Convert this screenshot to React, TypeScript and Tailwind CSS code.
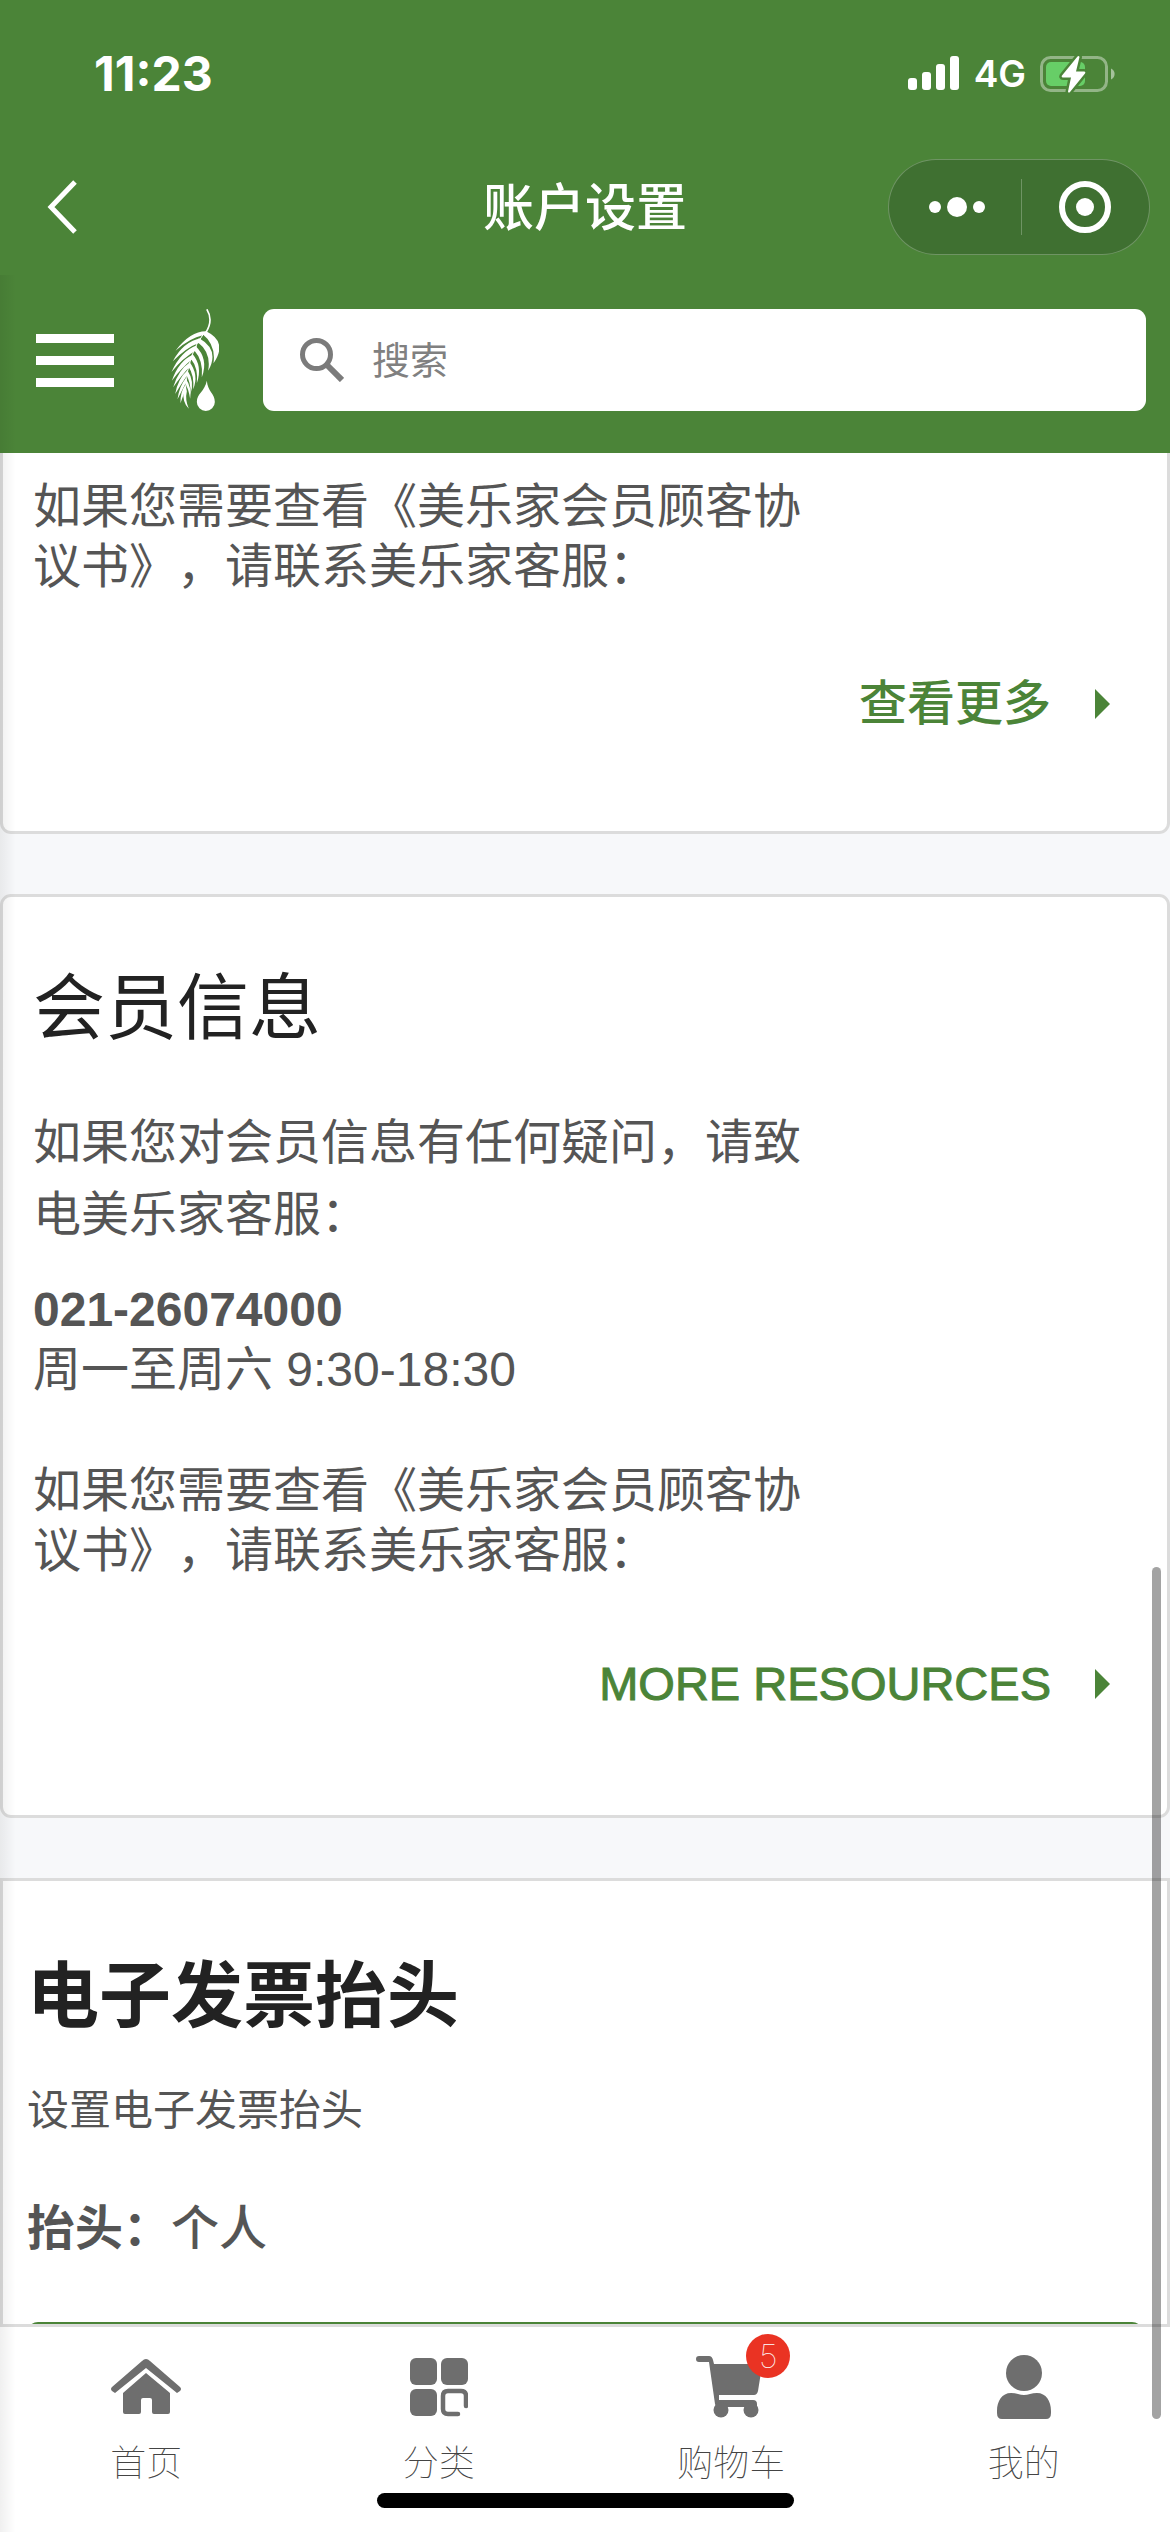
import type { ReactNode } from "react";

const leaflets = [
  "M170 124Q122 122 76 182Q120 144 158 136Z",
  "M153 145Q100 154 68 214Q108 172 148 158Z",
  "M140 166Q92 184 64 246Q98 204 138 181Z",
  "M128 194Q86 212 65 272Q94 234 126 208Z",
  "M120 216Q84 240 69 292Q94 256 118 231Z",
  "M113 240Q84 264 75 312Q94 280 112 254Z",
  "M108 264Q88 286 82 328Q96 300 108 277Z",
  "M105 286Q90 306 91 340Q98 318 106 299Z",
  "M156 131L168 124Q234 156 190 220Q198 164 156 131Z",
  "M146 144Q210 180 174 242Q184 188 142 156Z",
  "M136 168Q176 206 155 262Q160 212 132 181Z",
  "M127 192Q158 228 140 280Q145 234 122 206Z",
  "M118 216Q147 254 129 298Q133 256 114 229Z",
  "M111 239Q134 274 121 312Q123 278 107 252Z",
  "M106 264Q126 294 120 326Q115 296 103 275Z",
  "M106 284L100 300Q96 338 116 356Q104 330 110 304Z",
];

function LeafLogo() {
  return (
    <svg viewBox="63 57 143 306" className="h-[102px] w-12" fill="white" role="img" aria-label="美乐家">
      <path d="M170 58Q190 90 168 126" fill="none" stroke="white" strokeWidth="5" />
      <path d="M164 126Q112 190 106 296" fill="none" stroke="white" strokeWidth="3" />
      {leaflets.map((d) => (
        <path key={d} d={d} />
      ))}
      <path d="M170 272C172 304 194 310 194 336A27 27 0 0 1 140 336C140 310 164 304 170 272Z" />
    </svg>
  );
}

function SignalIcon() {
  return (
    <svg viewBox="0 0 52 36" className="h-9 w-[52px]" fill="white" aria-hidden="true">
      <rect x="0" y="22" width="9" height="12" rx="3" />
      <rect x="14" y="16" width="9" height="18" rx="3" />
      <rect x="28" y="8" width="9" height="26" rx="3" />
      <rect x="42" y="0" width="9" height="34" rx="3" />
    </svg>
  );
}

function BatteryIcon() {
  return (
    <svg viewBox="0 0 76 38" className="h-[38px] w-[76px]" aria-hidden="true">
      <rect x="1.5" y="2.5" width="65" height="33" rx="9" fill="none" stroke="white" strokeOpacity=".4" strokeWidth="3" />
      <path d="M71 13.500a6 6 0 0 1 0 11z" fill="white" fillOpacity=".5" />
      <rect x="6" y="7" width="39" height="24" rx="5" fill="#67ce67" />
      <path
        d="M37.500 1.500L22 20.500q-1 2 1 2h8L28 36.500q.5 2 2 .5L45 18.500q1-2-1-2h-8L39.500 2q-.5-1.500-2-.5z"
        fill="white"
        stroke="#4b8438"
        strokeWidth="5"
        paintOrder="stroke"
      />
    </svg>
  );
}

function HomeIcon() {
  return (
    <svg viewBox="0 0 70 56" className="h-14 w-[70px]" fill="#6e6e6e" aria-hidden="true">
      <path d="M31 2q4-4 8 0l30 26q2 2 0 4l-3 2L35 9 4 34l-3-2q-2-2 0-4z" />
      <path d="M35 14l24 20v19q0 2-2 2H43q-2 0-2-2V41q0-2-2-2h-7q-2 0-2 2v12q0 2-2 2H14q-2 0-2-2V34z" />
    </svg>
  );
}

function CategoryIcon() {
  return (
    <svg viewBox="0 0 58 59" className="h-[59px] w-[58px]" fill="#6e6e6e" aria-hidden="true">
      <rect width="27" height="27" rx="6" />
      <rect x="31" width="27" height="27" rx="6" />
      <rect y="31" width="27" height="27" rx="6" />
      <path
        d="M56 48V38q0-5-5-5H38q-5 0-5 5v13q0 5 5 5h10"
        fill="none"
        stroke="#6e6e6e"
        strokeWidth="4.500"
        strokeLinecap="round"
      />
    </svg>
  );
}

function CartIcon() {
  return (
    <svg viewBox="0 0 70 62" className="h-[62px] w-[70px]" fill="#6e6e6e" aria-hidden="true">
      <path d="M3 0h10q3 0 4 4l1 4h46q2 0 2 2l-4 25q-1 4-4 4H23v5h34q4 0 4 4v3H21q-1 0-2-3L13 6H3Q0 6 0 3t3-3z" />
      <circle cx="25" cy="54" r="7.500" />
      <circle cx="55" cy="54" r="7.500" />
    </svg>
  );
}

function UserIcon() {
  return (
    <svg viewBox="0 0 56 64" className="h-16 w-14" fill="#6e6e6e" aria-hidden="true">
      <circle cx="28" cy="18" r="18" />
      <path d="M15 38q4 0 7 1 6 2 12 0 3-1 7-1c9 0 14 8 14 18v2q0 6-5 6H6q-5 0-5-6v-2C1 46 6 38 15 38z" />
    </svg>
  );
}

function MoreLink({ children }: { children: ReactNode }) {
  return (
    <a href="#more" className="flex items-center justify-end gap-11 pr-[57px] font-medium text-[#4b8438]">
      {children}
      <svg viewBox="0 0 15 30" className="h-[30px] w-[15px]" fill="currentColor" aria-hidden="true">
        <path d="M0 0L15 15L0 30Z" />
      </svg>
    </a>
  );
}

function Agreement() {
  return (
    <p className="max-w-[800px]">
      如果您需要查看《美乐家会员顾客协议书》，请联系美乐家客服：
    </p>
  );
}

function NavItem({ icon, label, badge }: { icon: ReactNode; label: string; badge?: string }) {
  return (
    <a href="#nav" className="flex flex-1 flex-col items-center pt-6 text-4xl leading-[54px] font-thin text-[#444]">
      <span className="relative flex h-[72px] items-center">
        {icon}
        {badge && (
          <span className="absolute -top-[17px] -right-6 flex h-11 w-11 items-center justify-center rounded-full bg-[#ea3323] font-['Inter'] text-[33px] font-thin text-white">
            {badge}
          </span>
        )}
      </span>
      <span className="mt-[14px]">{label}</span>
    </a>
  );
}

export default function App() {
  return (
    <div
      lang="zh-CN"
      className="relative flex h-screen flex-col overflow-hidden bg-[#f7f8fa] font-['Liberation_Sans','Noto_Sans_CJK_SC',sans-serif] text-5xl leading-[60px] text-[#555] [text-spacing-trim:space-all]"
    >
      <header className="shrink-0 bg-[#4b8438] pb-[42px] text-white">
        <div className="flex items-center justify-between pt-11 pr-[54px] pl-[94px]">
          <span className="font-['Inter'] text-5xl leading-[60px] font-bold">11:23</span>
          <div className="flex items-center gap-[14px]">
            <SignalIcon />
            <span className="font-['Inter'] text-[37px] font-semibold">4G</span>
            <BatteryIcon />
          </div>
        </div>
        <div className="mt-[55px] grid grid-cols-[1fr_auto_1fr] items-center px-5">
          <button type="button" aria-label="返回" className="ml-[27px] justify-self-start">
            <svg viewBox="0 0 30 54" className="h-[54px] w-[30px]" fill="none" stroke="white" strokeWidth="5" aria-hidden="true">
              <path d="M28 2L4 27L28 52" />
            </svg>
          </button>
          <h1 className="pt-1 text-center text-[51px] font-medium">账户设置</h1>
          <div className="flex h-24 w-[262px] items-center justify-self-end rounded-full border border-white/25 bg-[#3f7031]">
            <button type="button" aria-label="更多" className="flex flex-1 items-center justify-center gap-[6px] pl-1">
              <span className="h-3 w-3 rounded-full bg-white" />
              <span className="h-5 w-5 rounded-full bg-white" />
              <span className="h-3 w-3 rounded-full bg-white" />
            </button>
            <span className="h-14 w-px bg-white/25" />
            <button type="button" aria-label="关闭" className="flex flex-1 justify-center">
              <span className="flex h-[52px] w-[52px] items-center justify-center rounded-full border-[6px] border-white">
                <span className="h-[18px] w-[18px] rounded-full bg-white" />
              </span>
            </button>
          </div>
        </div>
        <div className="mt-[54px] flex items-center pr-6 pl-9">
          <button type="button" aria-label="菜单" className="flex w-[78px] flex-col gap-[13px]">
            <span className="h-[9px] bg-white" />
            <span className="h-[9px] bg-white" />
            <span className="h-[9px] bg-white" />
          </button>
          <a href="#home" className="ml-[57px]">
            <LeafLogo />
          </a>
          <label className="ml-11 flex h-[102px] flex-1 items-center gap-7 rounded-[11px] bg-white pl-[37px]">
            <svg viewBox="0 0 44 44" className="h-11 w-11" fill="none" stroke="#7b7b7b" aria-hidden="true">
              <circle cx="16.500" cy="16.500" r="14" strokeWidth="5" />
              <path d="M27 27L42 42" strokeWidth="6" />
            </svg>
            <input
              type="search"
              aria-label="搜索"
              placeholder="搜索"
              className="min-w-0 flex-1 pt-[2px] text-[38px] text-[#444] outline-none placeholder:text-[#808080]"
            />
          </label>
        </div>
      </header>

      <main className="flex min-h-0 flex-1 flex-col gap-[60px] overflow-y-auto [scrollbar-width:none]">
        <section className="shrink-0 rounded-b-[11px] border-3 border-t-0 border-[#dcdcdc] bg-white pt-6 pb-[97px] pl-[30px]">
          <Agreement />
          <div className="mt-[77px]">
            <MoreLink>查看更多</MoreLink>
          </div>
        </section>

        <section className="shrink-0 rounded-[11px] border-3 border-[#dcdcdc] bg-white pt-[66px] pb-[101px] pl-[30px]">
          <h2 className="text-7xl leading-[90px] text-[#222]">会员信息</h2>
          <p className="mt-[54px] max-w-[800px] leading-[72px]">如果您对会员信息有任何疑问，请致电美乐家客服：</p>
          <p className="mt-[29px]">
            <strong className="block font-bold">021-26074000</strong>
            周一至周六 9:30-18:30
          </p>
          <div className="mt-[61px]">
            <Agreement />
          </div>
          <div className="mt-[73px] text-[47px] [-webkit-text-stroke:1px_#4b8438]">
            <MoreLink>MORE RESOURCES</MoreLink>
          </div>
        </section>

        <section className="shrink-0 border-3 border-[#dcdcdc] bg-white px-6 pt-[70px] pb-16">
          <h2 className="text-7xl leading-[90px] font-bold text-[#222]">电子发票抬头</h2>
          <p className="mt-10 text-[42px]">设置电子发票抬头</p>
          <p className="mt-[58px] font-medium">
            <strong className="font-bold">抬头：</strong>个人
          </p>
          <button type="button" aria-label="编辑抬头" className="mt-[63px] block h-[120px] w-full rounded-[11px] bg-[#4b8438]" />
        </section>
      </main>

      <nav aria-label="主导航" className="shrink-0 border-t-3 border-[#dcdcdc] bg-white pb-6">
        <div className="flex">
          <NavItem icon={<HomeIcon />} label="首页" />
          <NavItem icon={<CategoryIcon />} label="分类" />
          <NavItem icon={<CartIcon />} label="购物车" badge="5" />
          <NavItem icon={<UserIcon />} label="我的" />
        </div>
        <div className="mx-auto mt-[2px] h-[15px] w-[417px] rounded-full bg-black" />
      </nav>

      <div className="pointer-events-none absolute top-[275px] bottom-0 left-0 w-4 bg-linear-to-r from-black/6 to-transparent" />
      <div className="pointer-events-none absolute right-[9px] bottom-[113px] h-[852px] w-[9px] rounded-full bg-black/36" />
    </div>
  );
}
